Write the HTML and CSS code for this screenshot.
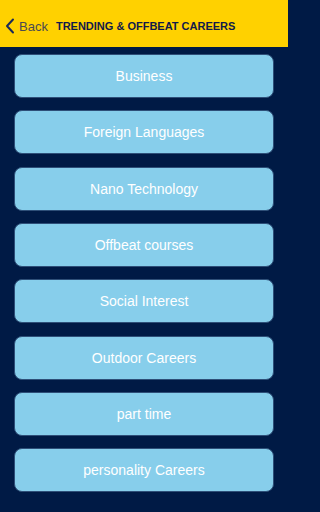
FILE: index.html
```html
<!DOCTYPE html>
<html>
<head>
<meta charset="utf-8">
<link rel="stylesheet" href="styles.css">
</head>
<body>
<div class="page">
  <div class="header">
    <div class="back">
      <svg class="chev" width="10" height="16" viewBox="0 0 10 16"><path d="M8 1.5 L2 8 L8 14.5" fill="none" stroke="#1a2a5a" stroke-width="2" stroke-linecap="round" stroke-linejoin="round"/></svg>
      <span class="back-text">Back</span>
    </div>
    <div class="title">TRENDING &amp; OFFBEAT CAREERS</div>
  </div>
  <div class="list">
    <div class="card">Business</div>
    <div class="card">Foreign Languages</div>
    <div class="card">Nano Technology</div>
    <div class="card">Offbeat courses</div>
    <div class="card">Social Interest</div>
    <div class="card">Outdoor Careers</div>
    <div class="card">part time</div>
    <div class="card">personality Careers</div>
  </div>
</div>
</body>
</html>
```
FILE: styles.css
```css
html, body {
  margin: 0;
  padding: 0;
  height: 512px;
  overflow: hidden;
  background: #001a45;
  font-family: "Liberation Sans", Arial, sans-serif;
}
.page {
  width: 288px;
}
.header {
  height: 47px;
  background: #ffd100;
  display: flex;
  align-items: center;
  padding-top: 5px;
  box-sizing: border-box;
}
.back {
  display: flex;
  align-items: center;
  margin-left: 5px;
}
.chev {
  display: block;
}
.back-text {
  margin-left: 4px;
  font-size: 13px;
  color: #4a4a52;
}
.title {
  margin-left: 8px;
  font-size: 11px;
  font-weight: bold;
  color: #101a4a;
}
.list {
  display: flex;
  flex-direction: column;
  gap: 12.33px;
  padding: 7px 14px 0 14px;
}
.card {
  height: 44px;
  box-sizing: border-box;
  background: #87ceeb;
  border: 1px solid #2e4f78;
  border-radius: 8px;
  display: flex;
  align-items: center;
  justify-content: center;
  color: #ffffff;
  font-size: 14px;
}
```
